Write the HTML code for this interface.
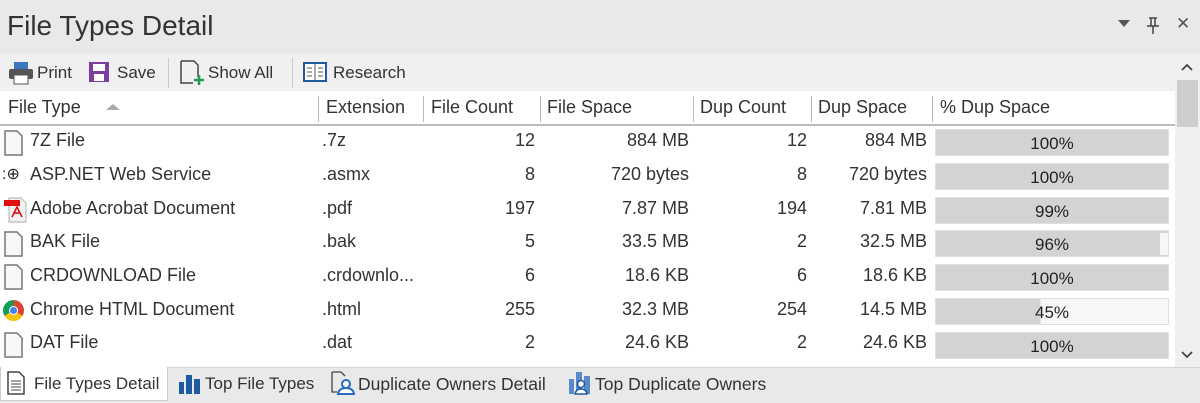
<!DOCTYPE html><html><head><style>
*{margin:0;padding:0;box-sizing:border-box}
body{width:1200px;height:403px;position:relative;overflow:hidden;background:#fff;font-family:"Liberation Sans",sans-serif;color:#333;font-size:18px}
.a{position:absolute;white-space:nowrap}
.r{text-align:right}
.bar{position:absolute;left:935px;width:234px;height:27px;background:#d3d3d3;border:1px solid #e0e0e0;text-align:center;line-height:27px;color:#222;font-size:17px}
.sep{position:absolute;top:96px;width:1px;height:26px;background:#bbb}
.doc{position:absolute;left:4px}
</style></head><body>
<div class="a" style="left:0;top:0;width:1200px;height:54px;background:#e9e9e9"></div>
<div class="a" style="left:7px;top:10px;font-size:28px;color:#333">File Types Detail</div>
<div class="a" style="left:1118px;top:20px;width:0;height:0;border-left:6px solid transparent;border-right:6px solid transparent;border-top:7px solid #555"></div>
<svg class="a" style="left:1146px;top:17px" width="14" height="18"><path d="M3 1h8M5 1v8M9 1v8M1 9h12M7 9v8" stroke="#444" stroke-width="1.5" fill="none"/></svg>
<div class="a" style="left:1176px;top:14px;font-size:17px;color:#555">✕</div>
<div class="a" style="left:0;top:54px;width:1175px;height:37px;background:#f0f0f0"></div>
<svg class="a" style="left:8px;top:61px" width="26" height="24"><rect x="6" y="1" width="14" height="7" fill="#3b78c0"/><rect x="1" y="8" width="24" height="10" rx="2" fill="#555"/><rect x="6" y="14" width="14" height="9" fill="#fff" stroke="#555"/></svg>
<div class="a" style="left:37px;top:63px;font-size:17px">Print</div>
<svg class="a" style="left:88px;top:61px" width="22" height="22"><rect x="1" y="1" width="20" height="20" fill="#7b3fa0"/><rect x="5" y="3" width="12" height="7" fill="#fff"/><rect x="6" y="13" width="10" height="7" fill="#fff"/></svg>
<div class="a" style="left:117px;top:63px;font-size:17px">Save</div>
<div class="a" style="left:168px;top:58px;width:1px;height:30px;background:#ccc"></div>
<svg class="a" style="left:180px;top:60px" width="26" height="26"><path d="M1 1h13l4 4v12M1 1v22h12" fill="none" stroke="#444" stroke-width="1.5"/><path d="M19 15v10M14 20h10" stroke="#2a9a50" stroke-width="2.5"/></svg>
<div class="a" style="left:208px;top:63px;font-size:17px">Show All</div>
<div class="a" style="left:292px;top:58px;width:1px;height:30px;background:#ccc"></div>
<svg class="a" style="left:303px;top:62px" width="24" height="20"><rect x="1" y="1" width="22" height="18" fill="#fff" stroke="#1e5aa0" stroke-width="2"/><path d="M12 1v18M4 6h5M4 10h5M4 14h5M15 6h5M15 10h5M15 14h5" stroke="#555"/></svg>
<div class="a" style="left:333px;top:63px;font-size:17px">Research</div>
<div class="a" style="left:0;top:124px;width:1175px;height:2px;background:#bdbdbd"></div>
<div class="a" style="left:8px;top:97px">File Type</div>
<div class="a" style="left:106px;top:104px;width:0;height:0;border-left:7px solid transparent;border-right:7px solid transparent;border-bottom:6px solid #aaa"></div>
<div class="sep" style="left:318px"></div><div class="a" style="left:326px;top:97px">Extension</div>
<div class="sep" style="left:423px"></div><div class="a" style="left:431px;top:97px">File Count</div>
<div class="sep" style="left:540px"></div><div class="a" style="left:547px;top:97px">File Space</div>
<div class="sep" style="left:693px"></div><div class="a" style="left:700px;top:97px">Dup Count</div>
<div class="sep" style="left:811px"></div><div class="a" style="left:818px;top:97px">Dup Space</div>
<div class="sep" style="left:932px"></div><div class="a" style="left:940px;top:97px">% Dup Space</div>

<svg class="doc" style="top:130px" width="20" height="26"><path d="M1 1h12l5 5v19H1z" fill="#f8f8f8" stroke="#777" stroke-width="1.5"/></svg><div class="a" style="left:30px;top:130px">7Z File</div><div class="a" style="left:322px;top:130px">.7z</div><div class="a r" style="right:665px;top:130px">12</div><div class="a r" style="right:511px;top:130px">884 MB</div><div class="a r" style="right:393px;top:130px">12</div><div class="a r" style="right:273px;top:130px">884 MB</div><div class="bar" style="top:129px">100%</div>

<div class="a" style="left:2px;top:164px;font-size:16px;color:#222">:⊕</div><div class="a" style="left:30px;top:164px">ASP.NET Web Service</div><div class="a" style="left:322px;top:164px">.asmx</div><div class="a r" style="right:665px;top:164px">8</div><div class="a r" style="right:511px;top:164px">720 bytes</div><div class="a r" style="right:393px;top:164px">8</div><div class="a r" style="right:273px;top:164px">720 bytes</div><div class="bar" style="top:163px">100%</div>

<svg class="doc" style="top:197px" width="24" height="26"><path d="M5 1h12l5 5v19H5z" fill="#f2f2f2" stroke="#bbb" stroke-width="1.2"/><rect x="0" y="3" width="16" height="6" fill="#e01010"/><path d="M8 20l5-10 5 10M10 16h6" stroke="#d00" stroke-width="1.5" fill="none"/></svg><div class="a" style="left:30px;top:198px">Adobe Acrobat Document</div><div class="a" style="left:322px;top:198px">.pdf</div><div class="a r" style="right:665px;top:198px">197</div><div class="a r" style="right:511px;top:198px">7.87 MB</div><div class="a r" style="right:393px;top:198px">194</div><div class="a r" style="right:273px;top:198px">7.81 MB</div><div class="bar" style="top:197px">99%</div>

<svg class="doc" style="top:231px" width="20" height="26"><path d="M1 1h12l5 5v19H1z" fill="#f8f8f8" stroke="#777" stroke-width="1.5"/></svg><div class="a" style="left:30px;top:231px">BAK File</div><div class="a" style="left:322px;top:231px">.bak</div><div class="a r" style="right:665px;top:231px">5</div><div class="a r" style="right:511px;top:231px">33.5 MB</div><div class="a r" style="right:393px;top:231px">2</div><div class="a r" style="right:273px;top:231px">32.5 MB</div><div class="bar" style="top:230px">96%<div class="a" style="left:224px;top:2px;width:8px;height:22px;background:#f7f7f7"></div></div>

<svg class="doc" style="top:264px" width="20" height="26"><path d="M1 1h12l5 5v19H1z" fill="#f8f8f8" stroke="#777" stroke-width="1.5"/></svg><div class="a" style="left:30px;top:265px">CRDOWNLOAD File</div><div class="a" style="left:322px;top:265px">.crdownlo...</div><div class="a r" style="right:665px;top:265px">6</div><div class="a r" style="right:511px;top:265px">18.6 KB</div><div class="a r" style="right:393px;top:265px">6</div><div class="a r" style="right:273px;top:265px">18.6 KB</div><div class="bar" style="top:264px">100%</div>

<div class="a" style="left:3px;top:300px;width:21px;height:21px;border-radius:50%;background:conic-gradient(#db4437 0 120deg,#f4c20d 120deg 240deg,#0f9d58 240deg)"></div><div class="a" style="left:9px;top:306px;width:9px;height:9px;border-radius:50%;background:#4285f4;border:1.5px solid #fff"></div><div class="a" style="left:30px;top:299px">Chrome HTML Document</div><div class="a" style="left:322px;top:299px">.html</div><div class="a r" style="right:665px;top:299px">255</div><div class="a r" style="right:511px;top:299px">32.3 MB</div><div class="a r" style="right:393px;top:299px">254</div><div class="a r" style="right:273px;top:299px">14.5 MB</div><div class="bar" style="top:298px;background:linear-gradient(90deg,#d3d3d3 45%,#f7f7f7 45%)">45%</div>

<svg class="doc" style="top:332px" width="20" height="26"><path d="M1 1h12l5 5v19H1z" fill="#f8f8f8" stroke="#777" stroke-width="1.5"/></svg><div class="a" style="left:30px;top:332px">DAT File</div><div class="a" style="left:322px;top:332px">.dat</div><div class="a r" style="right:665px;top:332px">2</div><div class="a r" style="right:511px;top:332px">24.6 KB</div><div class="a r" style="right:393px;top:332px">2</div><div class="a r" style="right:273px;top:332px">24.6 KB</div><div class="bar" style="top:332px">100%</div>

<div class="a" style="left:1175px;top:54px;width:25px;height:313px;background:#f0f0f0"></div>
<div class="a" style="left:1177px;top:80px;width:21px;height:47px;background:#cdcdcd"></div>
<svg class="a" style="left:1181px;top:63px" width="12" height="8"><path d="M1 7l5-5 5 5" stroke="#444" stroke-width="1.8" fill="none"/></svg>
<svg class="a" style="left:1181px;top:351px" width="12" height="8"><path d="M1 1l5 5 5-5" stroke="#444" stroke-width="1.8" fill="none"/></svg>

<div class="a" style="left:0;top:367px;width:1200px;height:36px;background:#e9e9e9;border-top:1px solid #d5d5d5"></div>
<div class="a" style="left:0;top:367px;width:168px;height:34px;background:#fff;border:1px solid #ccc;border-top:none"></div>
<svg class="a" style="left:7px;top:371px" width="18" height="24"><path d="M1 1h11l5 5v17H1z" fill="#fff" stroke="#444" stroke-width="1.5"/><path d="M4 10h10M4 13h10M4 16h10M4 19h10" stroke="#444"/></svg>
<div class="a" style="left:34px;top:374px;font-size:17px">File Types Detail</div>
<svg class="a" style="left:178px;top:372px" width="24" height="22"><rect x="1" y="10" width="5" height="12" fill="#1e5aa0"/><rect x="8" y="3" width="6" height="19" fill="#1e5aa0"/><rect x="16" y="7" width="6" height="15" fill="#1e5aa0"/></svg>
<div class="a" style="left:205px;top:374px;font-size:17px">Top File Types</div>
<svg class="a" style="left:331px;top:371px" width="24" height="24"><path d="M1 1h9l4 4M1 1v20h5" fill="none" stroke="#444" stroke-width="1.3"/><circle cx="15" cy="13" r="4" fill="#fff" stroke="#2a6bbf" stroke-width="2"/><path d="M7 23q1-6 8-6t8 6z" fill="#fff" stroke="#2a6bbf" stroke-width="2"/></svg>
<div class="a" style="left:358px;top:374px;font-size:17.5px">Duplicate Owners Detail</div>
<svg class="a" style="left:568px;top:371px" width="24" height="24"><rect x="1" y="8" width="5" height="15" fill="#5a8ac8"/><rect x="8" y="1" width="6" height="22" fill="#5a8ac8"/><rect x="16" y="5" width="6" height="18" fill="#5a8ac8"/><circle cx="13" cy="13" r="3.5" fill="#fff" stroke="#1e5aa0" stroke-width="1.5"/><path d="M7 23q1-5 6-5t6 5z" fill="#fff" stroke="#1e5aa0" stroke-width="1.5"/></svg>
<div class="a" style="left:595px;top:374px;font-size:17.5px">Top Duplicate Owners</div>
</body></html>
